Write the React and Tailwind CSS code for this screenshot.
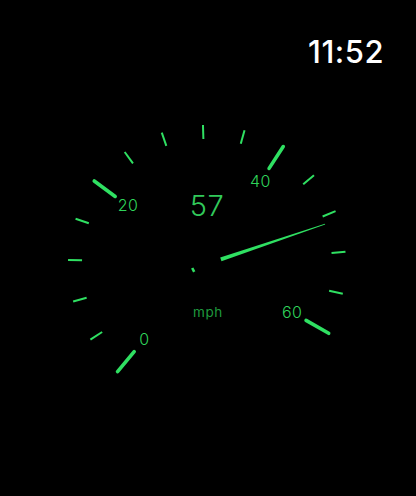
import React from "react";

const CX = 207;
const CY = 264;
const START = -140.3;
const STEP = 17.33;

function pt(angleDeg, r) {
  const a = (angleDeg * Math.PI) / 180;
  return [CX + r * Math.sin(a), CY - r * Math.cos(a)];
}

function Gauge() {
  const ticks = [];
  for (let i = 0; i < 16; i++) {
    const ang = START + i * STEP;
    const major = i % 5 === 0;
    const [x1, y1] = pt(ang, major ? 114 : 125);
    const [x2, y2] = pt(ang, major ? 140 : 139);
    ticks.push(
      <line
        key={i}
        x1={x1}
        y1={y1}
        x2={x2}
        y2={y2}
        stroke="#2fe062"
        strokeWidth={major ? 3.6 : 2}
        strokeLinecap={major ? "round" : "butt"}
      />
    );
  }
  const labels = [0, 20, 40, 60].map((v, k) => {
    const [x, y] = pt(START + k * 5 * STEP, 98);
    return (
      <text
        key={v}
        x={x}
        y={y + 1}
        textAnchor="middle"
        dominantBaseline="middle"
        fill="#2fd35a"
        fontSize="16"
        fontWeight="300"
        letterSpacing="0.4"
        fontFamily="Inter, 'Noto Sans', sans-serif"
      >
        {v}
      </text>
    );
  });

  const na = (71.3 * Math.PI) / 180;
  const ux = Math.sin(na);
  const uy = -Math.cos(na);
  const nx = -uy;
  const ny = ux;
  const bx = CX + 14.6 * ux;
  const by = CY + 14.6 * uy;
  const tx = CX + 124.6 * ux;
  const ty = CY + 124.6 * uy;
  const needle = [
    [bx + 2 * nx, by + 2 * ny],
    [tx + 0.4 * nx, ty + 0.4 * ny],
    [tx - 0.4 * nx, ty - 0.4 * ny],
    [bx - 2 * nx, by - 2 * ny],
  ]
    .map((p) => p.join(","))
    .join(" ");

  return (
    <svg width="416" height="412" viewBox="0 84 416 412" className="block">
      {ticks}
      {labels}
      <text
        x="207"
        y="208"
        textAnchor="middle"
        dominantBaseline="middle"
        fill="#31c95a"
        fontSize="29"
        fontWeight="300"
        letterSpacing="0.5"
        fontFamily="Inter, 'Noto Sans', sans-serif"
      >
        57
      </text>
      <text
        x="208"
        y="313"
        textAnchor="middle"
        dominantBaseline="middle"
        fill="#1f9a3e"
        fontSize="13.5"
        letterSpacing="0.6"
        fontFamily="Inter, 'Noto Sans', sans-serif"
      >
        mph
      </text>
      <polygon points={needle} fill="#2fe062" />
      <line
        x1="192.2"
        y1="268"
        x2="194.2"
        y2="271.8"
        stroke="#2fe062"
        strokeWidth="2.6"
      />
    </svg>
  );
}

export default function App() {
  return (
    <div className="w-[416px] h-[496px] bg-black flex flex-col overflow-hidden">
      <div className="h-[84px] flex justify-end items-start pr-[32px] pt-[33px]">
        <span
          className="text-white text-[31px] leading-[38px] font-medium tracking-[0.5px]"
          style={{ fontFamily: "Inter, 'Noto Sans', sans-serif" }}
        >
          11:52
        </span>
      </div>
      <Gauge />
    </div>
  );
}
